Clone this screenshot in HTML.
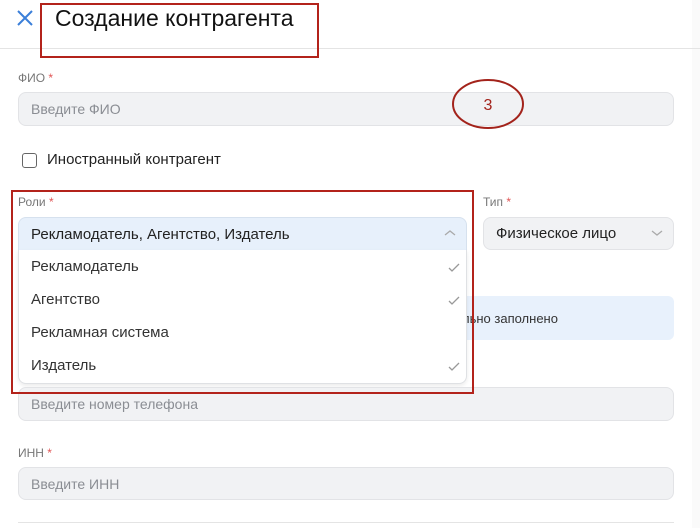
<!DOCTYPE html>
<html><head><meta charset="utf-8"><style>
*{box-sizing:border-box;margin:0;padding:0}
body{width:700px;height:528px;background:#fff;font-family:"Liberation Sans","DejaVu Sans",sans-serif;position:relative;overflow:hidden;color:#222}
.a{position:absolute}
.lbl{font-size:12px;color:#777}
.lbl b{color:#e05555;font-weight:normal}
.inp{background:#f1f2f4;border:1px solid #e2e3e6;border-radius:8px;font-size:14px;color:#8a8d93;padding-left:12px;display:flex;align-items:center}
.red{border:2.5px solid #b3231b}
.item{position:absolute;left:12px;font-size:15px;color:#333}
</style></head><body>
<div class="a" style="right:0;top:0;width:8px;height:528px;background:#fafafa"></div>
<svg class="a" style="left:16px;top:9px" width="18" height="18"><path d="M2 2L16 16M16 2L2 16" stroke="#3b7fd9" stroke-width="2"/></svg>
<div class="a" style="left:55px;top:5px;font-size:23px;color:#111">Создание контрагента</div>
<div class="a" style="left:0;top:48px;width:700px;height:1px;background:#e4e4e4"></div>
<div class="a red" style="left:40px;top:3px;width:279px;height:55px"></div>

<div class="a lbl" style="left:18px;top:71px">ФИО <b>*</b></div>
<div class="a inp" style="left:18px;top:92px;width:656px;height:34px">Введите ФИО</div>
<svg class="a" style="left:450px;top:78px" width="78" height="54"><ellipse cx="38" cy="26" rx="35" ry="24" fill="none" stroke="#a3231b" stroke-width="2"/><text x="38" y="32" font-size="16" fill="#a3231b" text-anchor="middle" font-family="Liberation Sans">3</text></svg>

<div class="a" style="left:22px;top:153px;width:15px;height:15px;border:1.5px solid #666;border-radius:3px"></div>
<div class="a" style="left:47px;top:151px;font-size:15px;color:#222">Иностранный контрагент</div>

<div class="a lbl" style="left:18px;top:195px">Роли <b>*</b></div>
<div class="a lbl" style="left:483px;top:195px">Тип <b>*</b></div>
<div class="a inp" style="left:483px;top:217px;width:191px;height:33px;color:#222;font-size:15px">Физическое лицо</div>
<svg class="a" style="left:650px;top:228px" width="14" height="10"><path d="M2 3L7 7L12 3" stroke="#aaa" fill="none" stroke-width="1.3"/></svg>

<div class="a" style="left:18px;top:296px;width:656px;height:44px;background:#e8f1fc;border-radius:6px"></div>
<div class="a" style="left:462px;top:311px;font-size:13px;color:#333">льно заполнено</div>

<div class="a inp" style="left:18px;top:217px;width:449px;height:34px;background:#e7f0fb;border-color:#d6e1ee;color:#222;border-radius:8px 8px 0 0;font-size:15px">Рекламодатель, Агентство, Издатель</div>
<svg class="a" style="left:443px;top:228px" width="14" height="10"><path d="M2 7L7 3L12 7" stroke="#aaa" fill="none" stroke-width="1.3"/></svg>
<div class="a" style="left:18px;top:250px;width:449px;height:134px;background:#fff;border:1px solid #dfe1e4;border-top:none;border-radius:0 0 8px 8px;box-shadow:0 2px 4px rgba(0,0,0,.08)">
<div class="item" style="top:8px">Рекламодатель</div>
<div class="item" style="top:41px">Агентство</div>
<div class="item" style="top:74px">Рекламная система</div>
<div class="item" style="top:107px">Издатель</div>
<svg class="a" style="left:428px;top:12px" width="14" height="112"><g stroke="#999" fill="none" stroke-width="1.3"><path d="M2 6L5 9L12 2"/><path d="M2 39L5 42L12 35"/><path d="M2 105L5 108L12 101"/></g></svg>
</div>

<div class="a inp" style="left:18px;top:387px;width:656px;height:34px">Введите номер телефона</div>
<div class="a red" style="left:11px;top:190px;width:463px;height:204px"></div>
<div class="a lbl" style="left:18px;top:446px">ИНН <b>*</b></div>
<div class="a inp" style="left:18px;top:467px;width:656px;height:33px">Введите ИНН</div>
<div class="a" style="left:18px;top:522px;width:656px;height:1px;background:#e4e4e4"></div>
</body></html>
